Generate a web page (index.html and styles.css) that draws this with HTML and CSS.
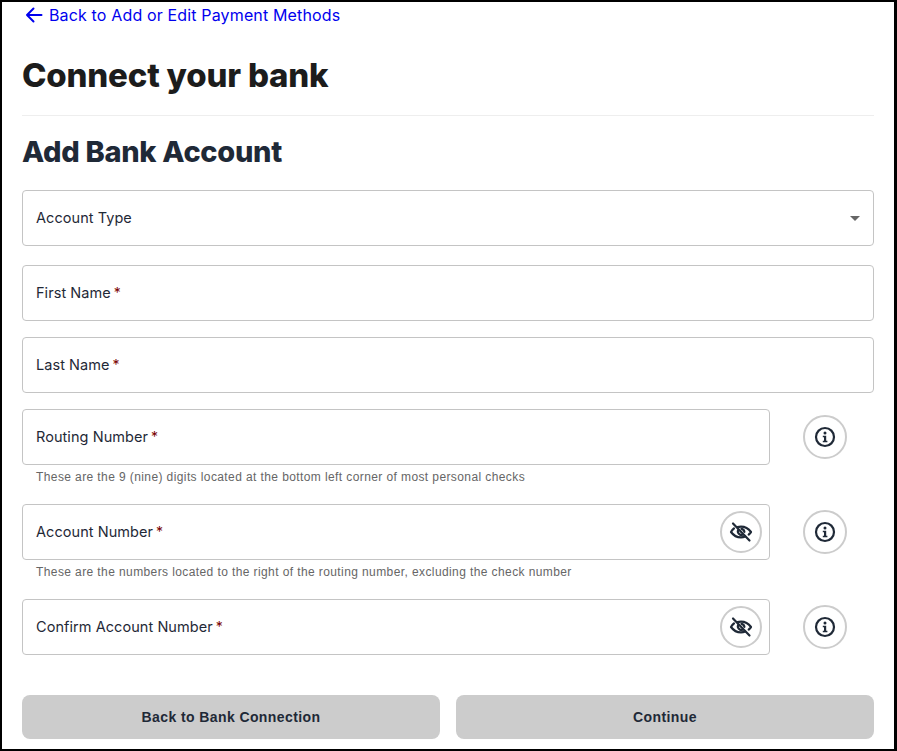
FILE: index.html
```html
<!DOCTYPE html>
<html lang="en">
<head>
    <meta charset="UTF-8">
    <meta name="viewport" content="width=device-width, initial-scale=1.0">
    <title>Connect your bank</title>
    <link rel="stylesheet" href="styles.css">
</head>
<body>
    <div class="page">
        <a class="back-link" href="#">
            <svg class="back-arrow" width="18" height="18" viewBox="0 0 18 18" fill="none" stroke="#0000ee" stroke-width="2" stroke-linecap="round" stroke-linejoin="round">
                <path d="M16.5 9H2M8.5 2.5L2 9l6.5 6.5"/>
            </svg>
            Back to Add or Edit Payment Methods
        </a>

        <h1 class="page-title">Connect your bank</h1>
        <h2 class="section-title">Add Bank Account</h2>

        <div class="field field-select">
            <span class="label">Account Type</span>
            <span class="caret"></span>
        </div>

        <div class="field field-first">
            <span class="label">First Name<span class="req">*</span></span>
        </div>

        <div class="field field-last">
            <span class="label">Last Name<span class="req">*</span></span>
        </div>

        <div class="row">
            <div class="field field-short">
                <span class="label">Routing Number<span class="req">*</span></span>
            </div>
            <button class="round-btn info-btn" type="button">
                <svg width="24" height="24" viewBox="0 0 24 24"><circle cx="12" cy="12" r="9" fill="none" stroke="#1f2937" stroke-width="2.2"/><circle cx="12" cy="8" r="1.5" fill="#1f2937"/><path d="M9.800 10.800h3.400v5h1.200v1.500H9.800v-1.500H11v-3.500H9.800z" fill="#1f2937"/></svg>
            </button>
        </div>
        <p class="help">These are the 9 (nine) digits located at the bottom left corner of most personal checks</p>

        <div class="row">
            <div class="field field-short">
                <span class="label">Account Number<span class="req">*</span></span>
                <button class="round-btn eye-btn" type="button">
                    <svg width="24" height="24" viewBox="0 0 24 24" fill="none" stroke="#1f2937" stroke-width="2.2" stroke-linecap="round" stroke-linejoin="round"><path d="M5 8.400C3.800 9.500 2.800 10.700 2 12c2.600 3.600 5.800 5.400 10 5.400 1.500 0 2.900-.3 4.200-.9"/><path d="M8.600 7.100c1.100-.4 2.200-.5 3.400-.5 4.200 0 7.400 1.800 10 5.400-.7 1-1.500 1.900-2.300 2.600"/><path d="M9.300 9.800a3.500 3.500 0 0 0 4.600 4.800"/><path d="M12.500 8.800a3.500 3.500 0 0 1 2.900 3"/><path d="M4 3.500l16.500 17"/></svg>
                </button>
            </div>
            <button class="round-btn info-btn" type="button">
                <svg width="24" height="24" viewBox="0 0 24 24"><circle cx="12" cy="12" r="9" fill="none" stroke="#1f2937" stroke-width="2.2"/><circle cx="12" cy="8" r="1.5" fill="#1f2937"/><path d="M9.800 10.800h3.400v5h1.200v1.500H9.800v-1.500H11v-3.500H9.800z" fill="#1f2937"/></svg>
            </button>
        </div>
        <p class="help">These are the numbers located to the right of the routing number, excluding the check number</p>

        <div class="row">
            <div class="field field-short">
                <span class="label">Confirm Account Number<span class="req">*</span></span>
                <button class="round-btn eye-btn" type="button">
                    <svg width="24" height="24" viewBox="0 0 24 24" fill="none" stroke="#1f2937" stroke-width="2.2" stroke-linecap="round" stroke-linejoin="round"><path d="M5 8.400C3.800 9.500 2.800 10.700 2 12c2.600 3.600 5.800 5.400 10 5.400 1.500 0 2.900-.3 4.200-.9"/><path d="M8.600 7.100c1.100-.4 2.200-.5 3.400-.5 4.200 0 7.400 1.800 10 5.400-.7 1-1.500 1.900-2.300 2.600"/><path d="M9.300 9.800a3.500 3.500 0 0 0 4.600 4.800"/><path d="M12.500 8.800a3.500 3.500 0 0 1 2.900 3"/><path d="M4 3.500l16.500 17"/></svg>
                </button>
            </div>
            <button class="round-btn info-btn" type="button">
                <svg width="24" height="24" viewBox="0 0 24 24"><circle cx="12" cy="12" r="9" fill="none" stroke="#1f2937" stroke-width="2.2"/><circle cx="12" cy="8" r="1.5" fill="#1f2937"/><path d="M9.800 10.800h3.400v5h1.200v1.500H9.800v-1.500H11v-3.500H9.800z" fill="#1f2937"/></svg>
            </button>
        </div>

        <div class="actions">
            <button class="action-btn" type="button">Back to Bank Connection</button>
            <button class="action-btn" type="button">Continue</button>
        </div>
    </div>
</body>
</html>
```

FILE: styles.css
```css
html, body {
    margin: 0;
    padding: 0;
}

body {
    font-family: Inter, "Liberation Sans", sans-serif;
    color: #1f2937;
    background-color: #fff;
    height: 100vh;
    overflow: hidden;
}

.page {
    box-sizing: border-box;
    height: 751px;
    border: 2px solid #000;
    border-right-width: 3px;
    padding: 0 20px;
    overflow: hidden;
}

.back-link {
    display: flex;
    align-items: center;
    gap: 6px;
    height: 26px;
    margin-left: 3px;
    font-size: 16px;
    letter-spacing: 0.15px;
    color: #0000ee;
    text-decoration: none;
}

.page-title {
    margin: 0;
    padding-top: 23px;
    height: 88px;
    box-sizing: border-box;
    font-size: 33px;
    line-height: 48px;
    font-weight: 800;
    letter-spacing: -0.2px;
    color: #1c1c1c;
    border-bottom: 1px solid #eeeeee;
}

.section-title {
    margin: 0;
    padding: 16px 0 18px;
    font-size: 29px;
    line-height: 40px;
    font-weight: 800;
    letter-spacing: -0.3px;
}

.field {
    box-sizing: border-box;
    display: flex;
    align-items: center;
    justify-content: space-between;
    height: 56px;
    padding: 0 7px 0 13px;
    border: 1px solid #c4c4c4;
    border-radius: 4px;
}

.field-select {
    margin-bottom: 19px;
}

.field-first,
.field-last {
    margin-bottom: 16px;
}

.field-short {
    width: 748px;
}

.label {
    padding-bottom: 2px;
    font-size: 14.5px;
    letter-spacing: 0.06px;
}

.req {
    margin-left: 3px;
    font-size: 14px;
    color: #7a0000;
}

.caret {
    width: 0;
    height: 0;
    margin-right: 6px;
    border-left: 5px solid transparent;
    border-right: 5px solid transparent;
    border-top: 5px solid #666;
}

.row {
    display: flex;
    align-items: center;
    gap: 33px;
}

.round-btn {
    box-sizing: border-box;
    display: flex;
    align-items: center;
    justify-content: center;
    padding: 0;
    border: 2px solid #cccccc;
    border-radius: 50%;
    background-color: #fff;
}

.info-btn {
    width: 44px;
    height: 44px;
}

.eye-btn {
    width: 42px;
    height: 42px;
}

.help {
    margin: 0;
    height: 39px;
    padding: 4px 0 0 14px;
    box-sizing: border-box;
    font-family: "Liberation Sans", sans-serif;
    font-size: 12px;
    line-height: 16px;
    letter-spacing: 0.4px;
    color: #666;
}

.actions {
    display: flex;
    gap: 16px;
    margin-top: 40px;
}

.action-btn {
    flex: 1;
    height: 44px;
    border: none;
    border-radius: 8px;
    background-color: #cccccc;
    color: #1f2937;
    font-family: "Liberation Sans", sans-serif;
    font-size: 14px;
    font-weight: 700;
    letter-spacing: 0.4px;
}
```
